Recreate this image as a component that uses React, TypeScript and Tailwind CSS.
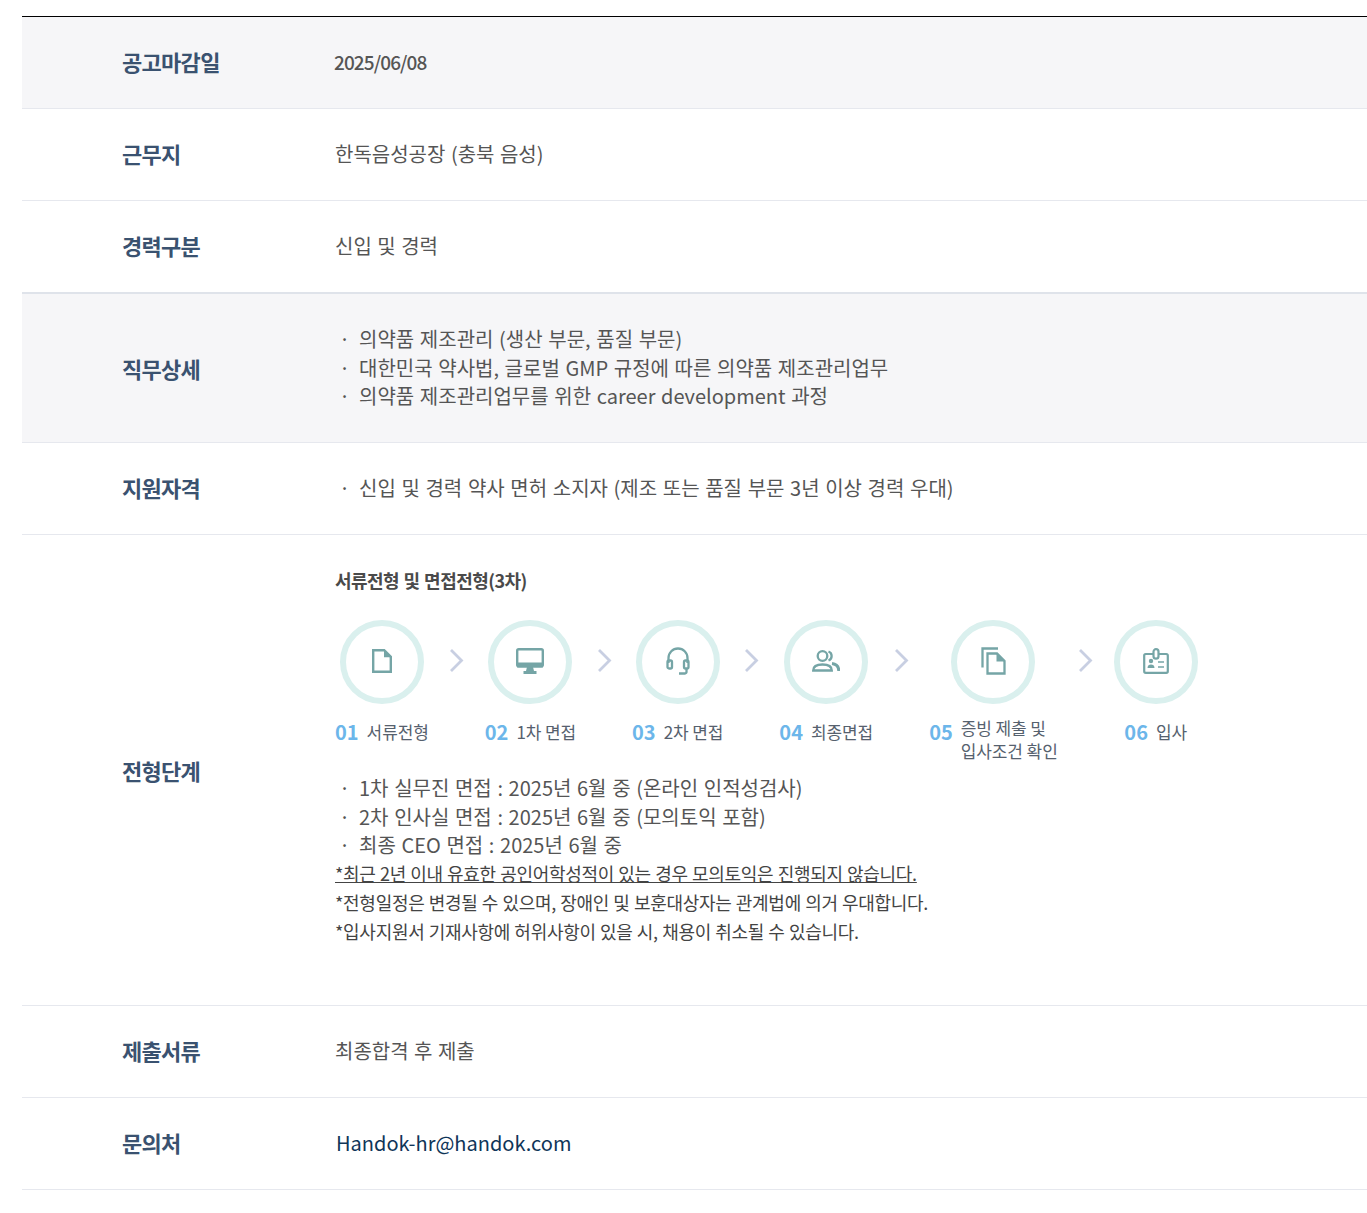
import React from 'react';

const stroke = '#75a5a6';

function IconDoc() {
  return (
    <svg width="20" height="24" viewBox="0 0 20 24" fill="none" stroke={stroke} strokeWidth="2.4">
      <path d="M1.2 1.2h11l6.6 6.6v15H1.2z" />
      <path d="M12 1.2v7h6.8" fill={stroke} stroke="none" />
    </svg>
  );
}

function IconMonitor() {
  return (
    <svg width="28" height="26" viewBox="0 0 28 26" fill="none">
      <rect x="1.2" y="1.2" width="25.6" height="17" rx="1.5" stroke={stroke} strokeWidth="2.4" />
      <rect x="1" y="14.5" width="26" height="5" fill={stroke} />
      <path d="M11 19h6l1 4h2.500v3H7.500v-3H10z" fill={stroke} />
    </svg>
  );
}

function IconHeadset() {
  return (
    <svg width="24" height="28" viewBox="0 0 24 28" fill="none" stroke={stroke} strokeWidth="2.3">
      <path d="M2.500 16v-5a9.500 9.500 0 0 1 19 0v5" />
      <rect x="1.500" y="13.500" width="4.500" height="8" rx="1.500" />
      <rect x="18" y="13.500" width="4.500" height="8" rx="1.500" />
      <path d="M20.500 21.500v3.500a1.500 1.500 0 0 1-1.500 1.500h-6" />
    </svg>
  );
}

function IconUsers() {
  return (
    <svg width="28" height="22" viewBox="0 0 28 22" fill="none" stroke={stroke} strokeWidth="2.3">
      <circle cx="10.500" cy="6" r="4.800" />
      <path d="M1.200 20.500c0-4 4-6 9.300-6s9.300 2 9.300 6z" />
      <path d="M16.500 1.500a4.800 4.800 0 0 1 0 9" />
      <path d="M20 13.500c4 .5 6.800 3 6.800 7.500" strokeWidth="3" />
    </svg>
  );
}

function IconCopy() {
  return (
    <svg width="25" height="28" viewBox="0 0 25 28" fill="none" stroke={stroke} strokeWidth="2.300">
      <path d="M17 1.500H1.500v19" />
      <path d="M6.500 6.500H16l7.500 7.500v12.500h-17z" />
      <path d="M15.500 6.500v8h8" fill={stroke} stroke="none" />
    </svg>
  );
}

function IconBadge() {
  return (
    <svg width="26" height="26" viewBox="0 0 26 26" fill="none" stroke={stroke} strokeWidth="2.200">
      <rect x="1.200" y="6" width="23.600" height="18.800" rx="1.500" />
      <rect x="10.500" y="1.200" width="5" height="9.500" rx="2.500" fill="#fff" />
      <circle cx="8" cy="13" r="2.200" fill={stroke} stroke="none" />
      <path d="M4.500 20c0-2.500 1.500-3.500 3.500-3.500s3.500 1 3.500 3.500z" fill={stroke} stroke="none" />
      <path d="M15 14h6M15 19h6" strokeWidth="1.700" />
    </svg>
  );
}

function Chevron() {
  return (
    <div className="flex h-[80px] w-14 items-center justify-center">
      <svg width="15" height="25" viewBox="0 0 15 25" fill="none" stroke="#c8cfe2" strokeWidth="2.800">
        <path d="M2 2l10.500 10.500L2 23" />
      </svg>
    </div>
  );
}

const steps = [
  { no: '01', label: '서류전형', icon: <IconDoc /> },
  { no: '02', label: '1차 면접', icon: <IconMonitor /> },
  { no: '03', label: '2차 면접', icon: <IconHeadset /> },
  { no: '04', label: '최종면접', icon: <IconUsers /> },
  { no: '05', label: '증빙 제출 및\n입사조건 확인', icon: <IconCopy />, twoLines: true },
  { no: '06', label: '입사', icon: <IconBadge /> },
];

function Row({
  label,
  gray,
  tall,
  className = 'border-b border-[#e6e8ee]',
  children,
}: {
  label: string;
  gray?: boolean;
  tall?: boolean;
  className?: string;
  children: React.ReactNode;
}) {
  return (
    <div className={`flex items-center ${className} ${gray ? 'bg-[#f6f6f8]' : ''}`}>
      <div className={`w-[313px] shrink-0 pl-[100px] text-[22px] font-bold tracking-[-0.7px] text-[#3a5270] ${tall ? '' : 'pb-[2px]'}`}>{label}</div>
      <div className="min-w-0 flex-1 text-[20px] text-[#555] [word-spacing:1px]">{children}</div>
    </div>
  );
}

function Bullets({ items }: { items: string[] }) {
  return (
    <ul className="text-[20px] leading-[28.5px] text-[#555] [word-spacing:1.15px]">
      {items.map((t) => (
        <li key={t} className="flex">
          <span className="w-6 shrink-0 pl-[4px]">·</span>
          <span>{t}</span>
        </li>
      ))}
    </ul>
  );
}

export default function App() {
  return (
    <div className="min-h-[1213px] bg-white pt-4 pl-[22px] font-['Noto_Sans_CJK_KR','Noto_Sans',sans-serif]">
      <div className="border-t border-black">
        <Row label="공고마감일" gray>
          <div className="-ml-px flex h-[91px] items-center text-[19px] font-medium tracking-[-0.9px]">2025/06/08</div>
        </Row>
        <Row label="근무지">
          <div className="flex h-[91px] items-center pb-[2px]">한독음성공장 (충북 음성)</div>
        </Row>
        <Row label="경력구분" className="border-b border-[#dfe3ea]">
          <div className="flex h-[91px] items-center pb-[2px]">신입 및 경력</div>
        </Row>
        <Row label="직무상세" gray tall className="border-t border-b border-t-[#dfe3ea] border-b-[#e6e8ee]">
          <div className="flex h-[148px] items-center">
            <Bullets
              items={[
                '의약품 제조관리 (생산 부문, 품질 부문)',
                '대한민국 약사법, 글로벌 GMP 규정에 따른 의약품 제조관리업무',
                '의약품 제조관리업무를 위한 career development 과정',
              ]}
            />
          </div>
        </Row>
        <Row label="지원자격">
          <div className="flex h-[91px] items-center">
            <Bullets items={['신입 및 경력 약사 면허 소지자 (제조 또는 품질 부문 3년 이상 경력 우대)']} />
          </div>
        </Row>
        <Row label="전형단계" tall>
          <div className="h-[470px] pt-[31px]">
            <div className="text-[18px] leading-[28px] font-bold tracking-[-0.55px] text-[#4a4a4a] [word-spacing:1px]">서류전형 및 면접전형(3차)</div>
            <div className="mt-[26px] flex items-start [word-spacing:0]">
              {steps.map((s, i) => (
                <React.Fragment key={s.no}>
                  <div className="flex flex-col items-center">
                    <div className="flex h-[84px] w-[84px] items-center justify-center rounded-full border-[6px] border-[#daf0ee] pb-[2px]">
                      {s.icon}
                    </div>
                    <div className="mt-[16px] flex h-[43px] items-start">
                      <span className="mr-[8px] text-[20px] leading-[23px] font-semibold text-[#6cb6ea]">{s.no}</span>
                      <span className={`text-[17px] leading-[23px] tracking-[-0.1px] whitespace-pre-line text-[#56616e] ${s.twoLines ? '-mt-1' : ''}`}>
                        {s.label}
                      </span>
                    </div>
                  </div>
                  {i < steps.length - 1 && <Chevron />}
                </React.Fragment>
              ))}
            </div>
            <div className="mt-[11px]">
              <Bullets
                items={[
                  '1차 실무진 면접 : 2025년 6월 중 (온라인 인적성검사)',
                  '2차 인사실 면접 : 2025년 6월 중 (모의토익 포함)',
                  '최종 CEO 면접 : 2025년 6월 중',
                ]}
              />
              <div className="-mt-px text-[18px] leading-[29px] tracking-[-0.3px] text-[#444] [word-spacing:0.6px]">
                <p className="underline">*최근 2년 이내 유효한 공인어학성적이 있는 경우 모의토익은 진행되지 않습니다.</p>
                <p>*전형일정은 변경될 수 있으며, 장애인 및 보훈대상자는 관계법에 의거 우대합니다.</p>
                <p>*입사지원서 기재사항에 허위사항이 있을 시, 채용이 취소될 수 있습니다.</p>
              </div>
            </div>
          </div>
        </Row>
        <Row label="제출서류">
          <div className="flex h-[91px] items-center pb-[2px]">최종합격 후 제출</div>
        </Row>
        <Row label="문의처">
          <div className="flex h-[91px] items-center pb-[2px] pl-px text-[20px] text-[#0f3558]">Handok-hr@handok.com</div>
        </Row>
      </div>
    </div>
  );
}
